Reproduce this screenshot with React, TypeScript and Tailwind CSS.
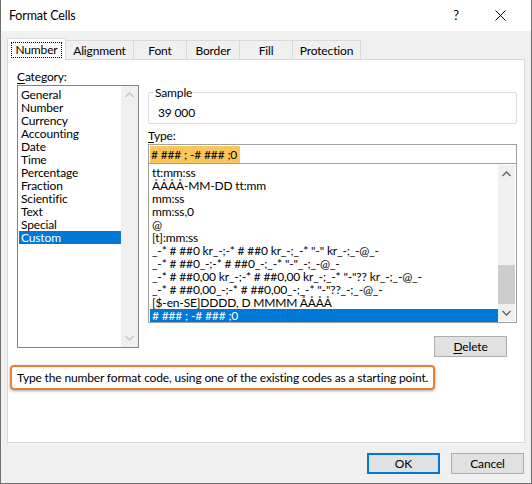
import React from 'react';

const categories = [
  'General',
  'Number',
  'Currency',
  'Accounting',
  'Date',
  'Time',
  'Percentage',
  'Fraction',
  'Scientific',
  'Text',
  'Special',
  'Custom',
];

const formats = [
  'tt:mm:ss',
  'ÅÅÅÅ-MM-DD tt:mm',
  'mm:ss',
  'mm:ss,0',
  '@',
  '[t]:mm:ss',
  '_-* # ##0 kr_-;-* # ##0 kr_-;_-* "-" kr_-;_-@_-',
  '_-* # ##0_-;-* # ##0_-;_-* "-"_-;_-@_-',
  '_-* # ##0,00 kr_-;-* # ##0,00 kr_-;_-* "-"?? kr_-;_-@_-',
  '_-* # ##0,00_-;-* # ##0,00_-;_-* "-"??_-;_-@_-',
  '[$-en-SE]DDDD, D MMMM ÅÅÅÅ',
  '# ### ; -# ### ;0',
];

const tabs = ['Alignment', 'Font', 'Border', 'Fill', 'Protection'];
const tabWidths = ['w-[68px]', 'w-[53px]', 'w-[53px]', 'w-[53px]', 'w-[68px]'];

const Chevron: React.FC<{ up?: boolean; color: string }> = ({ up, color }) => (
  <svg width="9" height="6" viewBox="0 0 9 6">
    <path
      d={up ? 'M0.5 5 L4.5 1 L8.5 5' : 'M0.5 1 L4.5 5 L8.5 1'}
      fill="none"
      stroke={color}
      strokeWidth="1.3"
    />
  </svg>
);

const App: React.FC = () => {
  return (
    <div className="w-[532px] h-[484px] bg-[#f0f0f0] border border-t-0 border-[#707070] flex flex-col font-['Lato',sans-serif] text-[12px] leading-[13px] tracking-[-0.15px] text-black whitespace-nowrap">
      {/* Title bar */}
      <div className="h-[31px] bg-white flex items-center shrink-0">
        <span className="pl-[8px] text-[12.5px]">Format Cells</span>
        <span className="ml-auto mr-[36px] text-[13px]">?</span>
        <svg className="mr-[25px]" width="11" height="11" viewBox="0 0 11 11">
          <path d="M0.5 0.5 L10.5 10.5 M10.5 0.5 L0.5 10.5" stroke="#000" strokeWidth="1" />
        </svg>
      </div>

      <div className="flex flex-col px-[6px] pt-[7px]">
        {/* Tabs */}
        <div className="flex items-end h-[22px] relative z-10">
          <div className="w-[59px] h-[22px] bg-white border border-b-0 border-[#d9d9d9] flex items-center justify-center">
            <span className="border border-dotted border-black px-[3px] h-[16px] flex items-center">Number</span>
          </div>
          {tabs.map((t, i) => (
            <div
              key={t}
              className={`${tabWidths[i]} h-[20px] border border-l-0 border-b-0 border-[#d9d9d9] flex items-center justify-center`}
            >
              {t}
            </div>
          ))}
        </div>

        {/* Panel */}
        <div className="h-[384px] -mt-px bg-white border border-[#d9d9d9] flex flex-col pl-[9px] pr-[6px] pt-[10px]">
          <div className="flex gap-[9px]">
            {/* Category column */}
            <div className="w-[122px] flex flex-col">
              <div className="h-[15px]">
                <u className="underline-offset-2">C</u>ategory:
              </div>
              <div className="h-[263px] border border-[#828282] flex">
                <div className="flex-1 pt-[2px] pl-[1px]">
                  {categories.map((c) => (
                    <div
                      key={c}
                      className={`h-[13px] pl-[2px] flex items-center ${
                        c === 'Custom' ? 'bg-[#0078d7] text-white' : ''
                      }`}
                    >
                      {c}
                    </div>
                  ))}
                </div>
                <div className="w-[17px] bg-[#f0f0f0] flex flex-col items-center justify-between py-[6px]">
                  <Chevron up color="#c5c5c5" />
                  <Chevron color="#c5c5c5" />
                </div>
              </div>
            </div>

            {/* Right column */}
            <div className="w-[369px] flex flex-col pt-[22px]">
              <div className="relative h-[32px] border border-[#dcdcdc] rounded-[2px] flex items-center pl-[9px] pt-[8px]">
                <span className="absolute -top-[7px] left-[5px] bg-white px-[1px]">Sample</span>
                39 000
              </div>
              <div className="mt-[4px] h-[14px] flex items-center">
                <span>
                  <u className="underline-offset-2">T</u>ype:
                </span>
              </div>
              <div className="mt-[2px] h-[20px] border border-[#a0a0a0] flex items-center px-px">
                <span className="bg-[#f9c55c] h-[17px] flex items-center pl-[1px] pr-[3px] whitespace-pre">
                  # ### ; -# ### ;0
                </span>
              </div>
              <div className="h-[160px] -mt-px border border-[#a0a0a0] flex">
                <div className="flex-1 pt-[2px] pl-[1px]">
                  {formats.map((f, i) => (
                    <div
                      key={i}
                      className={`h-[13px] pl-[2px] flex items-center whitespace-pre ${
                        i === formats.length - 1 ? 'bg-[#0078d7] text-white' : ''
                      }`}
                    >
                      {f}
                    </div>
                  ))}
                </div>
                <div className="w-[17px] bg-[#f0f0f0] flex flex-col items-center my-px mr-px">
                  <div className="h-[17px] flex items-center justify-center">
                    <Chevron up color="#606060" />
                  </div>
                  <div className="flex-1" />
                  <div className="h-[39px] w-full bg-[#cdcdcd]" />
                  <div className="h-[17px] flex items-center justify-center">
                    <Chevron color="#606060" />
                  </div>
                </div>
              </div>
              <div className="flex justify-end mt-[13px] pr-[10px]">
                <div className="w-[73px] h-[21px] bg-[#e1e1e1] border border-[#adadad] flex items-center justify-center">
                  <span>
                    <u className="underline-offset-2">D</u>elete
                  </span>
                </div>
              </div>
            </div>
          </div>

          {/* Description */}
          <div className="mt-[8px] -ml-[7px] w-[425px] h-[25px] border-2 border-[#ed7d31] rounded-[4px] shadow-[0_1px_3px_rgba(0,0,0,0.35)] flex items-center pl-[5px]">
            Type the number format code, using one of the existing codes as a starting point.
          </div>
        </div>

        {/* Buttons */}
        <div className="flex justify-end gap-[11px] mt-[10px] pr-px">
          <div className="w-[73px] h-[21px] bg-[#e1e1e1] border-2 border-[#0078d7] flex items-center justify-center">
            OK
          </div>
          <div className="w-[73px] h-[21px] bg-[#e1e1e1] border border-[#adadad] flex items-center justify-center">
            Cancel
          </div>
        </div>
      </div>
    </div>
  );
};

export default App;
